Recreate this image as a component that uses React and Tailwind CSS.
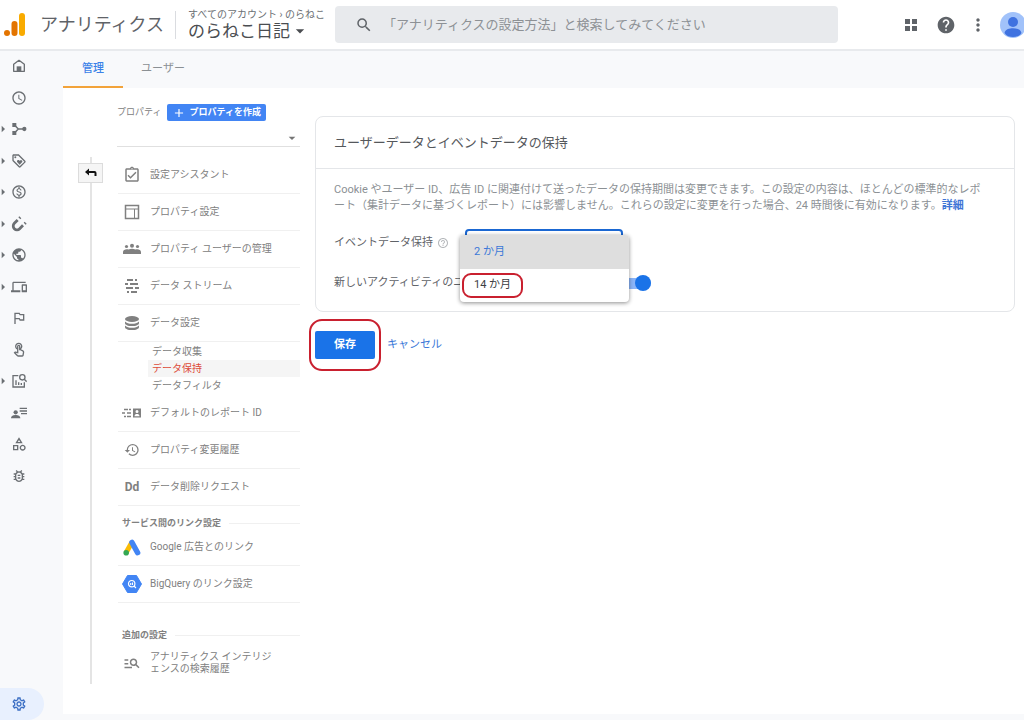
import React, { useState } from 'react';
import {
  MdAccessTime,
  MdOutlineLoyalty,
  MdOutlineMonetizationOn,
  MdPublic,
  MdDevices,
  MdOutlinedFlag,
  MdOutlineTouchApp,
  MdOutlineCategory,
  MdOutlineBugReport,
  MdOutlineSettings,
  MdSearch,
  MdHelp,
  MdHelpOutline,
  MdMoreVert,
  MdArrowDropDown,
  MdArrowRight,
  MdOutlineAssignmentTurnedIn,
  MdHistory,
  MdManageSearch,
  MdAdd,
} from 'react-icons/md';

/* Icons that are not in the icon set */

const Logo = () => (
  <svg viewBox="0 0 22 25" className="w-[22px] h-[25px] shrink-0" aria-hidden="true">
    <rect x="15" y="1" width="6" height="23" rx="3" fill="#f9ab00" />
    <rect x="7.5" y="9" width="6" height="15" rx="3" fill="#e37400" />
    <circle cx="3" cy="21" r="3" fill="#e37400" />
  </svg>
);

const HomeIcon = () => (
  <svg viewBox="0 0 24 24" fill="none" stroke="currentColor" strokeWidth="2" className="size-4">
    <path d="M4 20V9.500L12 3.500l8 6V20z" strokeLinejoin="round" />
    <path d="M8.500 12.500h7V20h-7z" fill="currentColor" stroke="none" />
  </svg>
);

const NetworkIcon = () => (
  <svg viewBox="0 0 24 24" fill="currentColor" className="size-4">
    <path d="M5 6l6 6-6 6M11 12h9" fill="none" stroke="currentColor" strokeWidth="2.200" />
    <rect x="2" y="3" width="6" height="6" />
    <rect x="2" y="15" width="6" height="6" />
    <circle cx="20" cy="12" r="3.200" />
  </svg>
);

const MagnetIcon = () => (
  <svg viewBox="0 0 24 24" fill="none" stroke="currentColor" strokeWidth="4.200" className="size-4">
    <path d="M10 6L5 11a5.500 5.500 0 0 0 8 8L18 14" />
    <path d="M12.500 3.500L14 2M20.500 11.500L22 10" />
  </svg>
);

const ChartSearchIcon = () => (
  <svg viewBox="0 0 24 24" fill="none" stroke="currentColor" strokeWidth="2" className="size-4">
    <path d="M11 4H3v17h17v-7" />
    <path d="M7.500 18v-7M11.500 18v-4M15.500 18v-3" />
    <circle cx="17" cy="6.500" r="4" />
    <path d="M20 9.500l3.500 3.500" />
  </svg>
);

const PersonListIcon = () => (
  <svg viewBox="0 0 24 24" fill="currentColor" className="size-4">
    <circle cx="7" cy="11" r="3.200" />
    <path d="M0 20c0-4 4-5 7-5s7 1 7 5z" />
    <path d="M13 4h11v2H13zM13 8h11v2H13zM15 12h9v2h-9z" />
  </svg>
);

const GridIcon = () => (
  <svg viewBox="0 0 14 14" fill="currentColor" className="size-[14px]">
    <path d="M1 1h5v5H1zM8 1h5v5H8zM1 8h5v5H1zM8 8h5v5H8z" />
  </svg>
);

const Avatar = () => (
  <svg viewBox="0 0 26 26" className="size-[26px]">
    <circle cx="13" cy="13" r="13" fill="#a1c2fa" />
    <circle cx="13" cy="10" r="5" fill="#3f72e0" />
    <path d="M4.500 21c1-4 5-4.700 8.500-4.700s7.500.7 8.500 4.700c-2 3-5 4-8.500 4s-6.500-1-8.500-4z" fill="#3f72e0" />
  </svg>
);

const LayoutIcon = () => (
  <svg viewBox="0 0 16 16" fill="none" stroke="currentColor" className="size-4">
    <path d="M1.500 1.500h13v13h-13z" strokeWidth="1.500" />
    <path d="M1.500 5h13M10.500 5v9.500" />
  </svg>
);

const GroupIcon = () => (
  <svg viewBox="0 0 18 12" fill="currentColor" className="w-[18px] h-3">
    <circle cx="3.500" cy="3.500" r="1.600" />
    <circle cx="9" cy="2.800" r="2" />
    <circle cx="14.500" cy="3.500" r="1.600" />
    <path d="M0 11V9c0-2 2-2.800 3.600-2.800.8 0 1.400.1 2 .4C6.600 6 7.800 5.700 9 5.700s2.400.3 3.400.9c.6-.3 1.200-.4 2-.4C16 6.200 18 7 18 9v2z" />
  </svg>
);

const DatabaseIcon = () => (
  <svg viewBox="0 0 16 16" fill="currentColor" className="size-4">
    <ellipse cx="8" cy="4" rx="7" ry="3" />
    <path d="M1 6.500c1.500 1.700 4 2.300 7 2.300s5.500-.6 7-2.300v1.700c0 1.600-3 2.900-7 2.900s-7-1.300-7-2.900z" />
    <path d="M1 10.500c1.500 1.700 4 2.300 7 2.300s5.500-.6 7-2.300v1.700c0 1.600-3 2.900-7 2.900s-7-1.300-7-2.900z" />
  </svg>
);

const StreamIcon = () => (
  <svg viewBox="0 0 16 16" stroke="currentColor" strokeWidth="2" className="size-4">
    <path d="M3 2h6M11 2h2M1 6h3M6 6h8M2 10h7M11 10h4M3 14h2M7 14h6" />
  </svg>
);

const ReportIdIcon = () => (
  <svg viewBox="0 0 20 12" className="w-[20px] h-3" fill="currentColor">
    <path d="M2 2.500h4M7 2.500h2M0 6h3M5 6h4M2 9.500h2M5 9.500h4" stroke="currentColor" strokeWidth="1.500" />
    <path fillRule="evenodd" d="M11 1.500h8v9h-8zM15 3a1.500 1.500 0 1 0 0 3 1.500 1.500 0 0 0 0-3zM12.500 9.200h5c0-1.700-1.200-2.200-2.500-2.200s-2.500.5-2.500 2.200z" />
  </svg>
);

const AdsIcon = () => (
  <svg viewBox="0 0 18 17" className="w-[18px] h-[17px]">
    <path d="M3.200 13.500L8.800 3.500" stroke="#fbbc04" strokeWidth="5" />
    <path d="M9 3.500l5.600 10.200" stroke="#4285f4" strokeWidth="5.500" strokeLinecap="round" />
    <circle cx="3.200" cy="13.700" r="2.800" fill="#34a853" />
  </svg>
);

const BigQueryIcon = () => (
  <svg viewBox="0 0 20 18" className="w-[20px] h-[18px]">
    <path d="M5.500.5h9L19.500 9l-5 8.500h-9L.5 9z" fill="#4285f4" stroke="#4285f4" strokeLinejoin="round" />
    <circle cx="9.700" cy="8.700" r="3.200" fill="none" stroke="#fff" strokeWidth="1.200" />
    <path d="M12 11l2 2M8.700 8v2M10.500 7.500V10" stroke="#fff" strokeWidth="1.100" />
  </svg>
);

const BackArrow = () => (
  <svg viewBox="0 0 12 10" className="w-3 h-[10px]">
    <path d="M0 4l4-3.500v2.500h5.500A2 2 0 0 1 11.500 5v3H9.500V5H4v2.500z" fill="#111" />
  </svg>
);

const navItems = [
  { label: 'ホーム', icon: <HomeIcon /> },
  { label: 'リアルタイム', icon: <MdAccessTime className="size-4" /> },
  { label: 'ライフサイクル', icon: <NetworkIcon />, sub: true },
  { label: '維持率', icon: <MdOutlineLoyalty className="size-4" />, sub: true },
  { label: '収益化', icon: <MdOutlineMonetizationOn className="size-4" />, sub: true },
  { label: '集客', icon: <MagnetIcon />, sub: true },
  { label: 'ユーザー属性', icon: <MdPublic className="size-4" />, sub: true },
  { label: 'テクノロジー', icon: <MdDevices className="size-4" />, sub: true },
  { label: 'コンバージョン', icon: <MdOutlinedFlag className="size-4" /> },
  { label: 'イベント', icon: <MdOutlineTouchApp className="size-4" /> },
  { label: '探索', icon: <ChartSearchIcon />, sub: true },
  { label: 'オーディエンス', icon: <PersonListIcon /> },
  { label: 'カスタム定義', icon: <MdOutlineCategory className="size-4" /> },
  { label: 'DebugView', icon: <MdOutlineBugReport className="size-4" /> },
];

const Header = () => (
  <header className="flex items-center h-[51px] pl-1 bg-white border-b-2 border-[#e8eaed] overflow-hidden">
    <Logo />
    <span className="ml-[14px] pt-px text-lg leading-6 text-[#5f6368] whitespace-nowrap">アナリティクス</span>
    <div className="ml-[11px] w-px h-7 bg-[#dadce0] shrink-0"></div>
    <button type="button" className="ml-3 w-[147px] shrink-0 text-left whitespace-nowrap">
      <span className="block text-[10px] leading-3 text-[#6b6f73]">すべてのアカウント › のらねこ</span>
      <span className="flex items-center text-[17px] leading-5 text-[#4a4d51]">
        のらねこ日記
        <MdArrowDropDown className="size-5" />
      </span>
    </button>
    <label className="flex items-center flex-1 min-w-0 h-[37px] px-5 rounded bg-[#e8eaed]">
      <MdSearch className="size-[18px] text-[#5f6368] shrink-0" />
      <input
        type="search"
        aria-label="検索"
        placeholder="「アナリティクスの設定方法」と検索してみてください"
        className="flex-1 min-w-0 ml-[10px] text-[13px] leading-5 bg-transparent outline-none placeholder:text-[#8d9195]"
      />
    </label>
    <div className="flex items-center shrink-0 w-[186px] pl-[66px] text-[#5f6368]">
      <button type="button" aria-label="アプリ"><GridIcon /></button>
      <button type="button" aria-label="ヘルプ" className="ml-[18px]"><MdHelp className="size-5" /></button>
      <button type="button" aria-label="その他" className="ml-3"><MdMoreVert className="size-5" /></button>
      <button type="button" aria-label="アカウント" className="ml-3 shrink-0"><Avatar /></button>
    </div>
  </header>
);

const Sidebar = () => (
  <nav className="flex flex-col w-[63px] shrink-0 text-[#6b6f73]">
    <ul className="flex flex-col justify-between h-[430px] mt-[5px]">
      {navItems.map((item) => (
        <li key={item.label}>
          <button type="button" aria-label={item.label} className="flex items-center h-5">
            <span className="flex justify-center w-[11px] pr-[5px]">
              {item.sub && <MdArrowRight className="size-4 shrink-0" />}
            </span>
            {item.icon}
          </button>
        </li>
      ))}
    </ul>
    <button
      type="button"
      aria-label="管理"
      className="flex items-center w-11 h-8 pl-[11px] mt-auto rounded-r-full bg-[#e8f0fe] text-[#3c6fc4]"
    >
      <MdOutlineSettings className="size-4" />
    </button>
  </nav>
);

const MenuRow = ({ icon, children }) => (
  <li className="border-b border-[#f0f0f0]">
    <a href="#" className="flex items-center h-9 text-[10px] leading-3 text-[#808080]">
      <span className="flex items-center justify-center w-7 shrink-0">{icon}</span>
      <span className="ml-1">{children}</span>
    </a>
  </li>
);

const MenuHeading = ({ children }) => (
  <h3 className="flex items-center gap-2 pl-[5px] text-[9px] leading-3 font-bold text-[#808080] whitespace-nowrap">
    {children}
    <span className="flex-1 h-px bg-[#f0f0f0]"></span>
  </h3>
);

const PropertyMenu = () => (
  <div className="w-[183px] shrink-0 pt-4">
    <div className="flex items-center gap-1.5 text-[9px] leading-[17px]">
      <label htmlFor="property" className="text-[#808080] whitespace-nowrap">プロパティ</label>
      <button type="button" className="flex items-center h-[17px] px-[5px] bg-[#4285f4] text-white font-bold rounded-xs whitespace-nowrap">
        <MdAdd className="size-[14px] mr-[3px]" />
        プロパティを作成
      </button>
    </div>
    <div className="flex items-end h-[26px] border-b border-[#e0e0e0]">
      <select id="property" className="flex-1 h-5 text-[10px] appearance-none outline-none"></select>
      <MdArrowDropDown className="size-4 text-[#757575] pointer-events-none" />
    </div>

    <ul className="mt-[10px] pl-px">
      <MenuRow icon={<MdOutlineAssignmentTurnedIn className="size-[18px]" />}>設定アシスタント</MenuRow>
      <MenuRow icon={<LayoutIcon />}>プロパティ設定</MenuRow>
      <MenuRow icon={<GroupIcon />}>プロパティ ユーザーの管理</MenuRow>
      <MenuRow icon={<StreamIcon />}>データ ストリーム</MenuRow>
      <MenuRow icon={<DatabaseIcon />}>データ設定</MenuRow>
      <li>
        <ul className="pl-[30px] py-px text-[10px] leading-[17px] text-[#808080]">
          <li><a href="#" className="block pl-1">データ収集</a></li>
          <li><a href="#" className="block pl-1 bg-[#f5f5f5] text-[#dd4b39]">データ保持</a></li>
          <li><a href="#" className="block pl-1">データフィルタ</a></li>
        </ul>
      </li>
      <MenuRow icon={<ReportIdIcon />}>デフォルトのレポート ID</MenuRow>
      <MenuRow icon={<MdHistory className="size-4" />}>プロパティ変更履歴</MenuRow>
      <MenuRow icon={<span className="text-xs font-bold">Dd</span>}>データ削除リクエスト</MenuRow>
    </ul>

    <div className="pt-[11px]">
      <MenuHeading>サービス間のリンク設定</MenuHeading>
      <ul className="pl-px">
        <MenuRow icon={<AdsIcon />}>Google 広告とのリンク</MenuRow>
        <MenuRow icon={<BigQueryIcon />}>BigQuery のリンク設定</MenuRow>
      </ul>
    </div>

    <div className="pt-[26px]">
      <MenuHeading>追加の設定</MenuHeading>
      <a href="#" className="flex items-center pl-px mt-[10px] text-[10px] leading-3 text-[#808080]">
        <span className="flex justify-center w-7 shrink-0"><MdManageSearch className="size-[18px]" /></span>
        <span className="ml-1">アナリティクス インテリジ<br />ェンスの検索履歴</span>
      </a>
    </div>
  </div>
);

const RetentionCard = () => {
  const [months, setMonths] = useState('2');
  const [reset, setReset] = useState(true);

  return (
    <section className="border border-[#e4e6e9] rounded-lg">
      <h2 className="px-[18px] py-4 text-[13px] leading-[19px] text-[#55585c] border-b border-[#e4e6e9]">
        ユーザーデータとイベントデータの保持
      </h2>
      <div className="px-[18px] pt-[13px] pb-[14px] text-[11px]">
        <p className="leading-4 text-[#8b9094]">
          Cookie やユーザー ID、広告 ID に関連付けて送ったデータの保持期間は変更できます。この設定の内容は、ほとんどの標準的なレポ
          <br />
          ート（集計データに基づくレポート）には影響しません。これらの設定に変更を行った場合、24 時間後に有効になります。
          <a href="#" className="font-bold text-[#3f74d6]">詳細</a>
        </p>

        <div className="flex items-center h-7 mt-[15px] text-[#5f6368]">
          <div className="flex items-center w-[131px] shrink-0">
            <label htmlFor="retention" className="whitespace-nowrap">イベントデータ保持</label>
            <MdHelpOutline className="ml-1 size-3 text-[#b5b8bb]" />
          </div>
          <div className="relative w-[158px] h-7">
            <select
              id="retention"
              value={months}
              onChange={(e) => setMonths(e.target.value)}
              className="w-full h-7 px-2 border-2 border-[#1a67d2] rounded appearance-none bg-white"
            >
              <option value="2">2 か月</option>
              <option value="14">14 か月</option>
            </select>
            {/* Open menu of the retention period */}
            <ul className="absolute top-[6px] -left-[5px] -right-[6px] z-10 bg-white rounded shadow-[0_1px_4px_rgba(0,0,0,0.45)]">
              <li>
                <button
                  type="button"
                  onClick={() => setMonths('2')}
                  className="w-full h-[34px] px-[14px] text-left bg-[#dedede] text-[#3b78d8] rounded-t"
                >
                  2 か月
                </button>
              </li>
              <li className="flex items-center h-[33px] px-0.5">
                <button
                  type="button"
                  onClick={() => setMonths('14')}
                  className="w-[61px] h-[25px] pl-[10px] text-left text-[#3c4043] border-2 border-[#c9202f] rounded-[9px]"
                >
                  14 か月
                </button>
              </li>
            </ul>
          </div>
        </div>

        <label className="flex items-center h-7 mt-3 text-[#5f6368]">
          <span className="w-[285px] whitespace-nowrap">新しいアクティビティのユ</span>
          <span className="flex items-center w-8 h-[11px] rounded-full bg-[#8ab4f8]">
            <input
              type="checkbox"
              role="switch"
              checked={reset}
              onChange={() => setReset(!reset)}
              className="appearance-none size-4 rounded-full bg-[#9aa0a6] checked:bg-[#1a73e8] checked:ml-auto"
            />
          </span>
        </label>
      </div>
    </section>
  );
};

const App = () => {
  return (
    <div className="flex flex-col min-h-screen bg-[#f8f9fb] font-[Roboto,'Noto_Sans_CJK_JP',sans-serif]">
      <Header />
      <div className="flex flex-1">
        <Sidebar />
        <div className="flex flex-col flex-1 min-w-0 pb-[6px]">
          <div className="flex h-[37px] text-[11px]">
            <button type="button" className="w-[60px] pt-0.5 font-medium text-[#3b82e8] border-b-2 border-[#f2a33a]">管理</button>
            <button type="button" className="w-20 text-[#8b9094]">ユーザー</button>
          </div>

          <main className="flex flex-1 items-start pl-[15px] pr-[9px] bg-white">
            <div className="flex self-stretch pb-[30px]">
              <div className="flex flex-col items-center w-[25px] mr-[14px] pt-[69px]">
                <div className="w-0.5 h-[6px] bg-[#e4e4e4]"></div>
                <button
                  type="button"
                  aria-label="戻る"
                  className="flex items-center justify-center w-[25px] h-5 bg-[#f5f5f5] border border-[#dcdcdc]"
                >
                  <BackArrow />
                </button>
                <div className="flex-1 w-0.5 bg-[#e4e4e4]"></div>
              </div>
              <PropertyMenu />
            </div>

            <div className="flex-1 min-w-0 ml-[15px] pt-7">
              <RetentionCard />
              <div className="flex items-center mt-[7px] -ml-[6px] text-[11px]">
                <div className="p-1 border-2 border-[#c9202f] rounded-[13px]">
                  <div className="py-[6px]">
                    <button type="button" className="block w-[60px] h-[28px] rounded-xs bg-[#1a73e8] text-white font-bold">保存</button>
                  </div>
                </div>
                <button type="button" className="ml-[6px] text-[#3b78d8]">キャンセル</button>
              </div>
            </div>
          </main>
        </div>
      </div>
    </div>
  );
};

export default App;
